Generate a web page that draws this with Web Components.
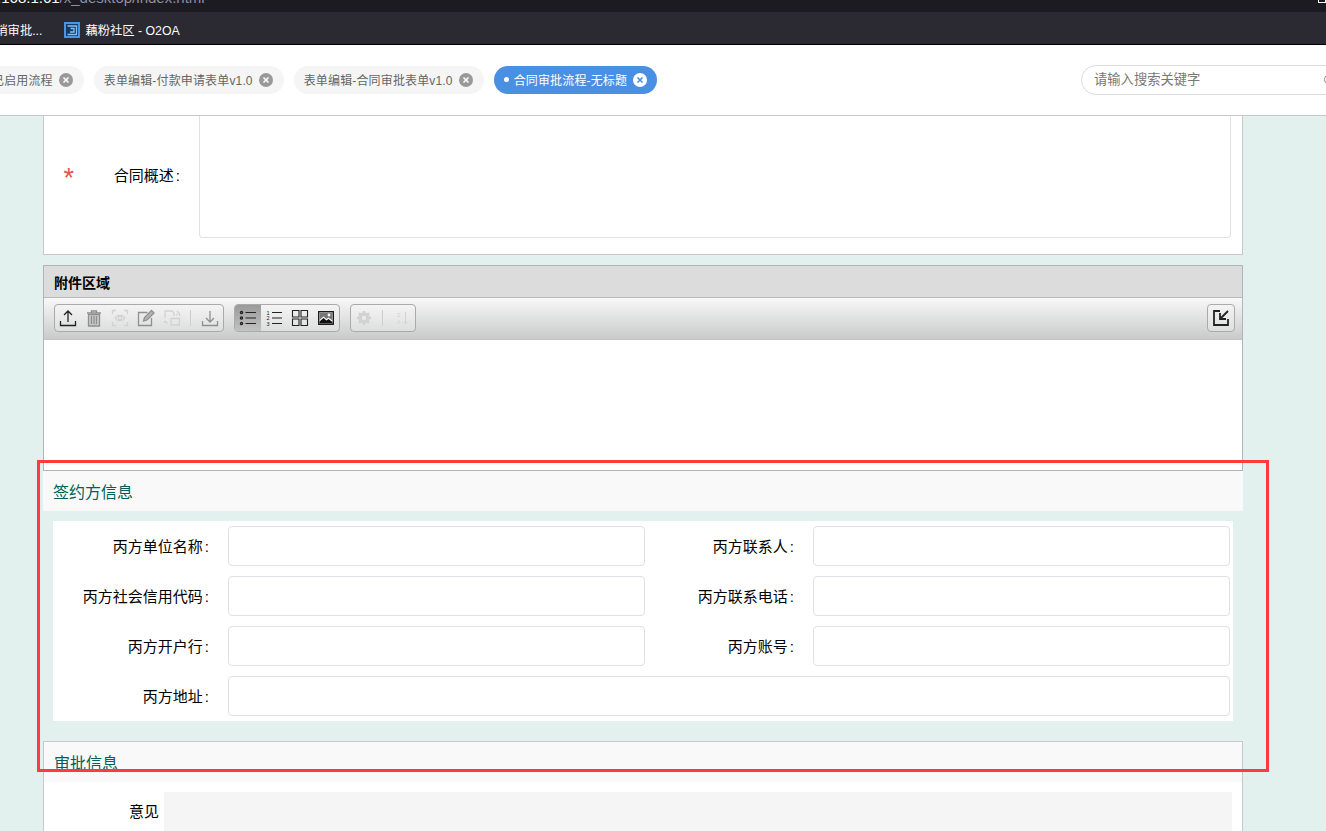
<!DOCTYPE html>
<html>
<head>
<meta charset="utf-8">
<style>
    html, body{ margin: 0; height: 100%; overflow: hidden; }
    body{
        background: #e2f1ed;
        font: 14px "Liberation Sans", "Noto Sans CJK SC", sans-serif;
        color: #000;
    }
</style>
</head>
<body>
<app-browser-bar></app-browser-bar>
<app-tab-bar>
    <app-tab style="margin-left:-18px">已启用流程</app-tab>
    <app-tab>表单编辑-付款申请表单v1.0</app-tab>
    <app-tab>表单编辑-合同审批表单v1.0</app-tab>
    <app-tab active>合同审批流程-无标题</app-tab>
</app-tab-bar>
<app-page>
    <app-summary-card></app-summary-card>
    <app-attachment-area></app-attachment-area>
    <app-section-head>签约方信息</app-section-head>
    <app-party-form></app-party-form>
    <app-approval-card></app-approval-card>
</app-page>
<app-highlight></app-highlight>
<script>
const closeIcon = `<svg width="14" height="14" viewBox="0 0 14 14"><circle cx="7" cy="7" r="7" fill="var(--x-bg)"/><path d="M4.500 4.500l5 5M9.500 4.500l-5 5" stroke="var(--x-fg)" stroke-width="1.600" fill="none"/></svg>`;

class AppBrowserBar extends HTMLElement{
    constructor(){
        super();
        this.attachShadow({mode: 'open'});
        this.shadowRoot.innerHTML = `
            <style>
                :host{ display: block; height: 45px; background: #2b2a33; box-sizing: border-box; border-bottom: 1px solid #000; color: #fbfbfe; overflow: hidden; }
                .top{ height: 12px; background: #1c1b22; display: flex; justify-content: space-between; overflow: hidden; }
                .url{ font-size: 15px; line-height: 15px; margin: -10px 0 0 -28px; color: #8f8f9d; white-space: nowrap; }
                .url b{ color: #fbfbfe; font-weight: 400; }
                .mark{ width: 8px; height: 3px; border: 1px solid #fff; border-top: 0; box-sizing: border-box; }
                .marks{ display: flex; height: 32px; box-sizing: border-box; padding-top: 3px; align-items: center; font-size: 12.300px; margin-left: -17px; }
                .marks span{ white-space: nowrap; }
                .marks svg{ margin: 0 5px 0 0; flex: none; }
                .first{ margin-right: 22px; }
            </style>
            <div class="top"><div class="url"><b>192.168.1.61</b>/x_desktop/index.html</div><div class="mark"></div></div>
            <div class="marks">
                <span class="first">撤销审批...</span>
                <svg width="16" height="16" viewBox="0 0 16 16"><rect x="1" y="1" width="14" height="14" fill="#173a63" stroke="#4a94e0" stroke-width="2"/><path d="M3.500 4h9v8.500h-9M6 10h4V6.500H6.500" fill="none" stroke="#86bdf0" stroke-width="1.300"/></svg>
                <span>藕粉社区 - O2OA</span>
            </div>`;
    }
}
customElements.define('app-browser-bar', AppBrowserBar);

class AppTab extends HTMLElement{
    constructor(){
        super();
        this.attachShadow({mode: 'open'});
        this.shadowRoot.innerHTML = `
            <style>
                :host{ display: flex; align-items: center; height: 28px; box-sizing: border-box; padding: 0 11px 2px 10px; border-radius: 14px; background: #f5f5f5; color: #666; font-size: 12px; letter-spacing: .15px; white-space: nowrap; gap: 6px; --x-bg: #999; --x-fg: #fff; }
                :host([active]){ background: #4a90e2; color: #fff; padding-right: 10px; --x-bg: #fff; --x-fg: #4a90e2; }
                .dot{ display: none; width: 5px; height: 5px; border-radius: 50%; background: #fff; margin-right: -1px; }
                :host([active]) .dot{ display: block; }
                svg{ display: block; flex: none; margin-top: 2px; }
            </style>
            <span class="dot"></span><slot></slot>${closeIcon}`;
    }
}
customElements.define('app-tab', AppTab);

class AppTabBar extends HTMLElement{
    constructor(){
        super();
        this.attachShadow({mode: 'open'});
        this.shadowRoot.innerHTML = `
            <style>
                :host{ display: flex; align-items: center; height: 71px; box-sizing: border-box; background: #fff; border-bottom: 1px solid #c8c8c8; gap: 10px; overflow: hidden; position: relative; }
                .search{ margin-left: auto; margin-right: -40px; width: 285px; height: 30px; box-sizing: border-box; border: 1px solid #ddd; border-radius: 15px; padding: 0 12px; font-size: 13.300px; line-height: 28px; color: #777; flex: none; position: relative; }
                .search i{ position: absolute; left: 242px; top: 8px; width: 9px; height: 9px; border: 1px solid #888; border-radius: 50%; }
            </style>
            <slot></slot>
            <div class="search">请输入搜索关键字<i></i></div>`;
    }
}
customElements.define('app-tab-bar', AppTabBar);

class AppPage extends HTMLElement{
    constructor(){
        super();
        this.attachShadow({mode: 'open'});
        this.shadowRoot.innerHTML = `
            <style>
                :host{ display: block; width: 1200px; margin-left: 43px; }
            </style>
            <slot></slot>`;
    }
}
customElements.define('app-page', AppPage);

class AppSummaryCard extends HTMLElement{
    constructor(){
        super();
        this.attachShadow({mode: 'open'});
        this.shadowRoot.innerHTML = `
            <style>
                :host{ display: flex; height: 139px; box-sizing: border-box; background: #fff; border: 1px solid #c8c8c8; border-top: 0; padding: 0 11px 16px 0; }
                .star{ width: 30px; text-align: right; color: #e8534a; font-size: 27px; line-height: 122px; height: 122px; flex: none; margin: 1px 1px 0 0; }
                .label{ width: 106px; padding-right: 18px; text-align: right; font-size: 15px; line-height: 120px; flex: none; }
                .c{ margin: 0 1px 0 2px; }
                .area{ flex: 1; border: 1px solid #e0e0e8; border-top: 0; border-radius: 0 0 4px 4px; }
            </style>
            <div class="star">*</div>
            <div class="label">合同概述<span class="c">:</span></div>
            <div class="area"></div>`;
    }
}
customElements.define('app-summary-card', AppSummaryCard);

class AppToolGroup extends HTMLElement{
    constructor(){
        super();
        this.attachShadow({mode: 'open'});
        this.shadowRoot.innerHTML = `
            <style>
                :host{ display: flex; align-items: center; height: 26px; border: 1px solid #aaa; border-radius: 4px; background: rgba(255,255,255,.25); overflow: hidden; }
            </style>
            <slot></slot>`;
    }
}
customElements.define('app-tool-group', AppToolGroup);

class AppAttachmentArea extends HTMLElement{
    constructor(){
        super();
        this.attachShadow({mode: 'open'});
        const btn = (body, cls = '') => `<span class="b ${cls}"><svg width="20" height="20" viewBox="0 0 20 20" fill="none" stroke="currentColor" stroke-width="1.300">${body}</svg></span>`;
        this.shadowRoot.innerHTML = `
            <style>
                :host{ display: block; height: 206px; box-sizing: border-box; margin-top: 10px; background: #fff; border: 1px solid #b4b4b4; }
                header{ height: 31px; background: #dcdcdc; border-bottom: 1px solid #b9b9b9; font-size: 14px; font-weight: 700; line-height: 35px; padding-left: 10px; }
                .bar{ display: flex; align-items: center; gap: 10px; height: 42px; box-sizing: border-box; padding: 0 7px 1px 10px; background: linear-gradient(#f8f8f8, #c9cbca); border-bottom: 1px solid #c4c4c4; }
                .b{ display: flex; align-items: center; justify-content: center; width: 26px; height: 26px; color: #222; flex: none; }
                .g{ color: #8f8f8f; } .l{ color: #d2d2d2; }
                .on{ background: linear-gradient(#9a9a9a, #c2c2c2); }
                .sep{ width: 1px; height: 16px; background: #ccc; margin: 0 6px 0 5px; flex: none; }
                .end{ margin-left: auto; }
                text{ font: 5.500px "Liberation Sans", sans-serif; fill: currentColor; stroke: none; }
            </style>
            <header>附件区域</header>
            <div class="bar">
                <app-tool-group>
                    ${btn('<path d="M10 14V3M6 7l4-4 4 4M2.500 13v4.500h15V13"/>')}
                    ${btn('<path d="M3 5h14M7.500 5V3h5v2" /><path d="M4.500 6.500h11V18h-11z" fill="currentColor" fill-opacity=".35"/><path d="M7.500 8v8M10 8v8M12.500 8v8"/>', 'g')}
                    ${btn('<path d="M2.500 6V2.500H6M14 2.500h3.500V6M17.500 14v3.500H14M6 17.500H2.500V14M5 10c2-3.500 8-3.500 10 0-2 3.500-8 3.500-10 0z"/><circle cx="10" cy="10" r="1.800"/>', 'l')}
                    ${btn('<path d="M15.500 10v7.500h-13v-13h9"/><path d="M7.500 13l1-3.500 7-7 2.500 2.500-7 7z" fill="currentColor" fill-opacity=".6"/>', 'g')}
                    ${btn('<path d="M3 10V3h7l2 2M12 5v3M3 13l2.500 2.500M3 13l-1 2M9 10.500h8.500v6.500H9zM15 3l2.500 2.500v2.500M14 7l1.500-1"/>', 'l')}
                    <span class="sep"></span>
                    ${btn('<path d="M10 3v11M6 10l4 4 4-4M2.500 13v4.500h15V13"/>', 'g')}
                </app-tool-group>
                <app-tool-group>
                    ${btn('<path d="M7.500 4.500H18M7.500 10H18M7.500 15.500H18" stroke="#222" stroke-width="1.100"/><circle cx="3.500" cy="4.500" r="1.100"/><circle cx="3.500" cy="10" r="1.100"/><circle cx="3.500" cy="15.500" r="1.100"/>', 'on')}
                    ${btn('<path d="M8 4.500h10M8 10h10M8 15.500h10" stroke-width="1.100"/><text x="2.500" y="6.500">1</text><text x="2.500" y="12">2</text><text x="2.500" y="17.500">3</text>')}
                    ${btn('<path d="M2.500 2.500h6.500v6.500H2.500zM11 2.500h6.500v6.500H11zM2.500 11h6.500v6.500H2.500zM11 11h6.500v6.500H11z" stroke-width="1.100"/>')}
                    ${btn('<rect x="2.700" y="3.700" width="14.600" height="12.600" fill="#fff" stroke="#111" stroke-width="1.300"/><path d="M3.500 15.500v-2l4-3.500 3 2.500 2-1.500 4 3v1.500z" fill="#111" stroke="none"/><path d="M3.500 4.500h13v8l-4-3-2 1.500-3-2.500-4 3.500z" fill="#777" stroke="none"/><circle cx="13" cy="7" r="1.400" fill="#fff" stroke="none"/>')}
                </app-tool-group>
                <app-tool-group>
                    ${btn('<circle cx="10" cy="10" r="4" stroke-width="3.500"/><path d="M10 3v3M10 14v3M3 10h3M14 10h3M5 5l2 2M13 13l2 2M15 5l-2 2M7 13l-2 2" stroke-width="2.400"/>', 'l')}
                    <span class="sep"></span>
                    ${btn('<path d="M13.500 4v12M11 13.500l2.500 2.500 2.500-2.500" stroke-width="1"/><text x="5" y="9">Z</text><text x="5" y="15.500">A</text>', 'l')}
                </app-tool-group>
                <app-tool-group class="end">
                    ${btn('<path d="M9 3H3v14h14v-6M17 3l-8 8M9 5v6h6" stroke-width="1.800"/>')}
                </app-tool-group>
            </div>`;
    }
}
customElements.define('app-attachment-area', AppAttachmentArea);

class AppSectionHead extends HTMLElement{
    constructor(){
        super();
        this.attachShadow({mode: 'open'});
        this.shadowRoot.innerHTML = `
            <style>
                :host{ display: block; height: 40px; box-sizing: border-box; background: #f9f9f9; color: #005f58; font-size: 16px; line-height: 44px; padding-left: 10px; }
            </style>
            <slot></slot>`;
    }
}
customElements.define('app-section-head', AppSectionHead);

class AppPartyForm extends HTMLElement{
    constructor(){
        super();
        this.attachShadow({mode: 'open'});
        const rows = [
            ['丙方单位名称', '丙方联系人'],
            ['丙方社会信用代码', '丙方联系电话'],
            ['丙方开户行', '丙方账号'],
        ];
        const label = (text) => `<label>${text}<span class="c">:</span></label>`;
        const field = (text) => `${label(text)}<div class="in"></div>`;
        this.shadowRoot.innerHTML = `
            <style>
                :host{ display: grid; grid-template-columns: 157px 417px 168px 417px; row-gap: 10px; margin: 10px 10px 0; padding: 5px 3px 5px 18px; background: #fff; align-items: center; }
                label{ font-size: 15px; text-align: right; padding: 0 18px 2px 0; white-space: nowrap; justify-self: end; }
                .c{ margin: 0 1px 0 2px; }
                .in{ height: 40px; box-sizing: border-box; border: 1px solid #e0e0e8; border-radius: 4px; background: #fff; }
                .wide{ grid-column: 2 / 5; }
            </style>
            ${rows.map(r => field(r[0]) + field(r[1])).join('')}
            ${label('丙方地址')}<div class="in wide"></div>`;
    }
}
customElements.define('app-party-form', AppPartyForm);

class AppApprovalCard extends HTMLElement{
    constructor(){
        super();
        this.attachShadow({mode: 'open'});
        this.shadowRoot.innerHTML = `
            <style>
                :host{ display: block; margin-top: 20px; height: 90px; box-sizing: border-box; background: #fff; border: 1px solid #c8c8c8; border-bottom: 0; overflow: hidden; }
                h2{ margin: 0; height: 40px; background: #f9f9f9; color: #005f58; font-size: 16px; font-weight: 400; line-height: 44px; padding-left: 10px; }
                .row{ display: flex; margin: 10px 10px 0 0; }
                .label{ width: 115px; margin-right: 5px; font-size: 15px; text-align: right; line-height: 40px; flex: none; }
                .area{ flex: 1; height: 90px; background: #f5f5f5; }
            </style>
            <h2>审批信息</h2>
            <div class="row"><div class="label">意见</div><div class="area"></div></div>`;
    }
}
customElements.define('app-approval-card', AppApprovalCard);

class AppHighlight extends HTMLElement{
    constructor(){
        super();
        this.attachShadow({mode: 'open'});
        this.shadowRoot.innerHTML = `
            <style>
                :host{ display: block; position: absolute; left: 37px; top: 460px; width: 1232px; height: 312px; box-sizing: border-box; border: 3px solid #ff3b3b; pointer-events: none; }
            </style>`;
    }
}
customElements.define('app-highlight', AppHighlight);
</script>
</body>
</html>
